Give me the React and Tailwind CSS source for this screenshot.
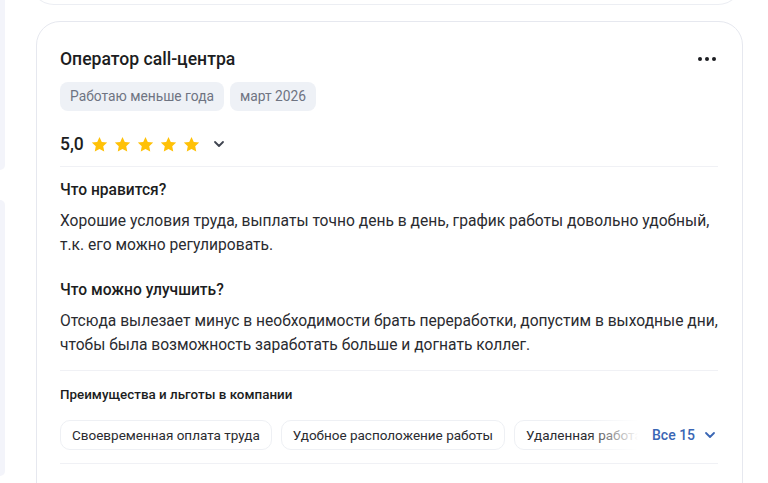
import React from 'react';

const Star = () => (
  <svg width="19" height="19" viewBox="0 0 24 24" className="shrink-0">
    <path
      d="M12 2.5l2.9 6.2 6.8.8-5 4.7 1.3 6.7L12 17.6l-6 3.3 1.3-6.7-5-4.7 6.8-.8z"
      fill="#ffc107"
    />
  </svg>
);

const Chevron = ({ className = '', color = '#3f4450' }) => (
  <svg width="12" height="12" viewBox="0 0 12 12" className={className}>
    <path d="M2 4l4 4 4-4" fill="none" stroke={color} strokeWidth="1.8" strokeLinecap="round" strokeLinejoin="round" />
  </svg>
);

const benefits = ['Своевременная оплата труда', 'Удобное расположение работы', 'Удаленная работа'];

export default function App() {
  return (
    <div
      className="relative w-[768px] h-[483px] overflow-hidden bg-white text-[#1c1d21]"
      style={{ fontFamily: 'Roboto, "Noto Sans", sans-serif' }}
    >
      {/* left column edge */}
      <div className="absolute left-0 top-0 w-[5px] h-[170px] bg-[#f3f4fa] rounded-br-[12px]" />
      <div className="absolute left-0 top-[200px] w-[5px] h-[276px] bg-[#f3f4fa] rounded-r-[12px]" />

      <div className="ml-[30px] mr-[26px] -mt-[40px] h-[45px] rounded-b-[24px] border border-[#eceef3] border-t-0" />

      <div className="ml-[36px] mr-[25px] mt-[16px] h-[500px] rounded-[24px] border border-[#e6e8ef] pl-[23px] pr-[24px] pt-[25px]">
        <div className="flex items-center justify-between h-[24px]">
          <h2 className="text-[17.6px] font-medium">Оператор call-центра</h2>
          <div className="flex gap-[3px] mr-[2px]">
            <span className="w-[4px] h-[4px] rounded-full bg-[#1c1d21]" />
            <span className="w-[4px] h-[4px] rounded-full bg-[#1c1d21]" />
            <span className="w-[4px] h-[4px] rounded-full bg-[#1c1d21]" />
          </div>
        </div>

        <div className="flex gap-[6px] mt-[11px]">
          <span className="h-[29px] px-[10px] flex items-center rounded-[8px] bg-[#eef1f6] text-[13.8px] text-[#6f7482]">Работаю меньше года</span>
          <span className="h-[29px] px-[10px] flex items-center rounded-[8px] bg-[#eef1f6] text-[13.8px] text-[#6f7482]">март 2026</span>
        </div>

        <div className="flex items-center mt-[21px] h-[24px]">
          <span className="text-[17.5px] font-medium mr-[6px]">5,0</span>
          <div className="flex gap-[4px]">
            <Star /><Star /><Star /><Star /><Star />
          </div>
          <Chevron className="ml-[12px]" />
        </div>

        <div className="h-px bg-[#f0f1f5] mt-[10px]" />

        <h3 className="mt-[11px] text-[15.6px] font-medium leading-[24px]">Что нравится?</h3>
        <p className="mt-[7px] text-[15.6px] leading-[24px] text-[#2a2b30]">
          Хорошие условия труда, выплаты точно день в день, график работы довольно удобный, т.к. его можно регулировать.
        </p>

        <h3 className="mt-[21px] text-[15.6px] font-medium leading-[24px]">Что можно улучшить?</h3>
        <p className="mt-[7px] text-[15.6px] leading-[24px] text-[#2a2b30]">
          Отсюда вылезает минус в необходимости брать переработки, допустим в выходные дни, чтобы была возможность заработать больше и догнать коллег.
        </p>

        <div className="h-px bg-[#f0f1f5] mt-[13px]" />

        <h4 className="mt-[14px] text-[13.4px] font-medium leading-[20px]">Преимущества и льготы в компании</h4>

        <div className="flex items-center mt-[15px]">
          <div className="relative flex gap-[9px] w-[578px] overflow-hidden">
            {benefits.map((b) => (
              <span
                key={b}
                className="shrink-0 h-[30px] px-[11px] flex items-center rounded-[10px] border border-[#eef0f4] text-[13.5px] text-[#2a2b30] whitespace-nowrap"
              >
                {b}
              </span>
            ))}
            <div className="absolute right-0 top-0 h-full w-[50px] bg-gradient-to-r from-transparent to-white" />
          </div>
          <button className="ml-[14px] flex items-center text-[14px] text-[#3a66b4] font-medium">
            Все 15
            <Chevron className="ml-[9px]" color="#3a66b4" />
          </button>
        </div>

        <div className="h-px bg-[#f0f1f5] mt-[13px]" />
      </div>
    </div>
  );
}
